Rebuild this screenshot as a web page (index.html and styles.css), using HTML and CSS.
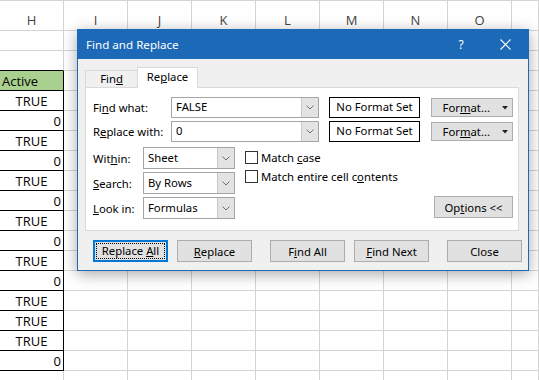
FILE: index.html
```html
<!DOCTYPE html>
<html lang="en">
<head>
  <meta charset="UTF-8" />
  <title>Find and Replace</title>
  <link rel="stylesheet" href="styles.css">
</head>
<body>
  <div class="sheet" id="sheet"></div>

  <div class="dialog">
    <div class="titlebar">
      <span class="title">Find and Replace</span>
      <span class="help">?</span>
      <span class="close-x">
        <svg width="11" height="11" viewBox="0 0 11 11"><path d="M0.5 0.5 L10.5 10.5 M10.5 0.5 L0.5 10.5" stroke="#fff" stroke-width="1.1" fill="none"/></svg>
      </span>
    </div>

    <div class="dialog-body">
      <div class="tabs">
        <div class="tab">Fin<u>d</u></div>
        <div class="tab active">Re<u>p</u>lace</div>
        <div class="tab-fill"></div>
      </div>

      <div class="panel">
        <div class="field-row">
          <label class="field-label">Fi<u>n</u>d what:</label>
          <div class="combo"><span class="combo-text">FALSE</span><span class="combo-arrow"><svg width="8" height="5" viewBox="0 0 8 5"><path d="M0.5 0.5 L4 4 L7.5 0.5" stroke="#707070" fill="none"/></svg></span></div>
          <div class="fmt-box">No Format Set</div>
          <button class="btn fmt-btn"><span>For<u>m</u>at...</span><svg width="6" height="4" viewBox="0 0 6 4"><path d="M0 0 H6 L3 3.5 Z" fill="#222"/></svg></button>
        </div>
        <div class="field-row">
          <label class="field-label">R<u>e</u>place with:</label>
          <div class="combo"><span class="combo-text">0</span><span class="combo-arrow"><svg width="8" height="5" viewBox="0 0 8 5"><path d="M0.5 0.5 L4 4 L7.5 0.5" stroke="#707070" fill="none"/></svg></span></div>
          <div class="fmt-box">No Format Set</div>
          <button class="btn fmt-btn"><span>For<u>m</u>at...</span><svg width="6" height="4" viewBox="0 0 6 4"><path d="M0 0 H6 L3 3.5 Z" fill="#222"/></svg></button>
        </div>

        <div class="options">
          <div class="selects">
            <div class="sel-row">
              <label class="sel-label">Wit<u>h</u>in:</label>
              <div class="combo select"><span class="combo-text">Sheet</span><span class="combo-arrow"><svg width="8" height="5" viewBox="0 0 8 5"><path d="M0.5 0.5 L4 4 L7.5 0.5" stroke="#707070" fill="none"/></svg></span></div>
            </div>
            <div class="sel-row">
              <label class="sel-label"><u>S</u>earch:</label>
              <div class="combo select"><span class="combo-text">By Rows</span><span class="combo-arrow"><svg width="8" height="5" viewBox="0 0 8 5"><path d="M0.5 0.5 L4 4 L7.5 0.5" stroke="#707070" fill="none"/></svg></span></div>
            </div>
            <div class="sel-row">
              <label class="sel-label"><u>L</u>ook in:</label>
              <div class="combo select"><span class="combo-text">Formulas</span><span class="combo-arrow"><svg width="8" height="5" viewBox="0 0 8 5"><path d="M0.5 0.5 L4 4 L7.5 0.5" stroke="#707070" fill="none"/></svg></span></div>
            </div>
          </div>
          <div class="checks">
            <div class="check-row"><span class="checkbox"></span><span>Match <u>c</u>ase</span></div>
            <div class="check-row"><span class="checkbox"></span><span>Match entire cell c<u>o</u>ntents</span></div>
          </div>
          <button class="btn options-btn">Op<u>t</u>ions &lt;&lt;</button>
        </div>
      </div>

      <div class="actions">
        <button class="btn default"><span class="focus">Replace <u>A</u>ll</span></button>
        <button class="btn"><u>R</u>eplace</button>
        <button class="btn wide-gap">F<u>i</u>nd All</button>
        <button class="btn"><u>F</u>ind Next</button>
        <button class="btn wide-gap">Close</button>
      </div>
    </div>
  </div>

  <script>
    const cols = ['H', 'I', 'J', 'K', 'L', 'M', 'N', 'O', ''];
    const colH = ['', '', 'Active', 'TRUE', '0', 'TRUE', '0', 'TRUE', '0', 'TRUE', '0',
                  'TRUE', '0', 'TRUE', 'TRUE', 'TRUE', '0', ''];
    const sheet = document.getElementById('sheet');

    let html = '';
    cols.forEach(c => { html += `<div class="cell col-head">${c}</div>`; });

    colH.forEach((val, r) => {
      cols.forEach((c, i) => {
        let cls = 'cell';
        let text = '';
        if (i === 0) {
          text = val;
          if (r === 1) cls += ' tb-top';
          if (r >= 2 && r <= 16) cls += ' tb';
          if (val === 'Active') cls += ' hdr';
          if (val === 'TRUE') cls += ' bool';
          if (val === '0') cls += ' num';
        }
        html += `<div class="${cls}">${text}</div>`;
      });
    });
    sheet.innerHTML = html;
  </script>
</body>
</html>
```

FILE: styles.css
```css
* {
  box-sizing: border-box;
}

body {
  margin: 0;
  width: 539px;
  height: 380px;
  overflow: hidden;
  position: relative;
  background: #fff;
  font-family: "Open Sans", sans-serif;
}

/* spreadsheet */

.sheet {
  display: grid;
  grid-template-columns: repeat(8, 64px) 1fr;
  grid-template-rows: 31px;
  grid-auto-rows: 20px;
}

.cell {
  border-right: 1px solid #d4d4d4;
  border-bottom: 1px solid #d4d4d4;
  font-size: 13px;
  line-height: 21px;
  padding: 0 3px;
  white-space: nowrap;
  overflow: hidden;
  color: #000;
}

.col-head {
  border-top: 1px solid #d4d4d4;
  text-align: center;
  color: #444;
  padding-top: 9px;
  line-height: 20px;
}

.tb-top {
  border-bottom-color: #000;
}

.tb {
  border-right-color: #000;
  border-bottom-color: #000;
}

.hdr {
  background: #a9d08e;
  padding-left: 2px;
}

.bool {
  text-align: center;
}

.num {
  text-align: right;
  padding-right: 2px;
}

/* dialog */

.dialog {
  position: absolute;
  left: 77px;
  top: 29px;
  width: 452px;
  height: 242px;
  background: #f0f0f0;
  border: 1px solid #1c69b7;
  box-shadow: 0 3px 14px rgba(0, 0, 0, 0.35);
  font-family: "Noto Sans", sans-serif;
  font-size: 11.3px;
  color: #000;
}

.titlebar {
  height: 29px;
  background: #1c69b7;
  color: #fff;
  display: flex;
  align-items: center;
  padding-left: 8px;
}

.title {
  flex: 1;
  font-size: 11.6px;
}

.help {
  width: 42px;
  text-align: center;
  font-size: 12px;
}

.close-x {
  width: 46px;
  display: flex;
  justify-content: center;
}

.dialog-body {
  padding: 8px 9px 0 7px;
}

.tabs {
  display: flex;
  align-items: flex-end;
  height: 21px;
}

.tab {
  height: 18px;
  width: 52px;
  border: 1px solid #d9d9d9;
  border-right: none;
  text-align: center;
  line-height: 16px;
}

.tab.active {
  height: 21px;
  width: 61px;
  background: #fff;
  border-right: 1px solid #d9d9d9;
  border-bottom: none;
  line-height: 18px;
}

.tab-fill {
  flex: 1;
  border-bottom: 1px solid #d9d9d9;
}

.panel {
  background: #fff;
  border: 1px solid #d9d9d9;
  border-top: none;
  height: 143px;
  padding: 9px 5px 0 7px;
}

.field-row {
  display: flex;
  align-items: center;
  height: 21px;
  margin-bottom: 3px;
}

.field-label {
  width: 78px;
}

.combo {
  display: flex;
  width: 148px;
  height: 21px;
  border: 1px solid #a5a5a5;
  background: #fff;
}

.combo-text {
  flex: 1;
  padding-left: 4px;
  line-height: 18px;
}

.combo-arrow {
  width: 17px;
  background: #e3e3e3;
  border-left: 1px solid #c8c8c8;
  display: flex;
  align-items: center;
  justify-content: center;
}

.fmt-box {
  width: 91px;
  height: 21px;
  margin-left: 10px;
  border: 1px solid #000;
  text-align: center;
  line-height: 18px;
}

.btn {
  font-family: inherit;
  font-size: inherit;
  color: #000;
  background: #e1e1e1;
  border: 1px solid #adadad;
  border-radius: 0;
  padding: 0;
  flex-shrink: 0;
}

.fmt-btn {
  width: 82px;
  height: 19px;
  margin-left: 11px;
  display: flex;
  align-items: center;
  justify-content: flex-end;
  gap: 12px;
  padding-right: 4px;
}

.options {
  display: flex;
  margin-top: 5px;
}

.sel-row {
  display: flex;
  align-items: center;
  height: 22px;
  margin-bottom: 3px;
}

.sel-label {
  width: 50px;
}

.combo.select {
  width: 92px;
  height: 22px;
}

.combo.select .combo-text {
  line-height: 19px;
}

.checks {
  margin-left: 10px;
  padding-top: 1px;
}

.check-row {
  display: flex;
  align-items: center;
  height: 19px;
}

.checkbox {
  width: 13px;
  height: 13px;
  border: 1px solid #333;
  background: #fff;
  margin-right: 3px;
}

.options-btn {
  margin-left: auto;
  align-self: flex-end;
  width: 79px;
  height: 22px;
  margin-bottom: 4px;
}

.actions {
  display: flex;
  padding-left: 8px;
  margin-top: 9px;
}

.actions .btn {
  width: 75px;
  height: 22px;
  margin-right: 9px;
}

.actions .wide-gap {
  margin-left: 9px;
}

.btn.default {
  border: 2px solid #0078d7;
  padding: 1px;
}

.focus {
  display: block;
  height: 100%;
  border: 1px dotted #000;
  line-height: 14px;
}
```
